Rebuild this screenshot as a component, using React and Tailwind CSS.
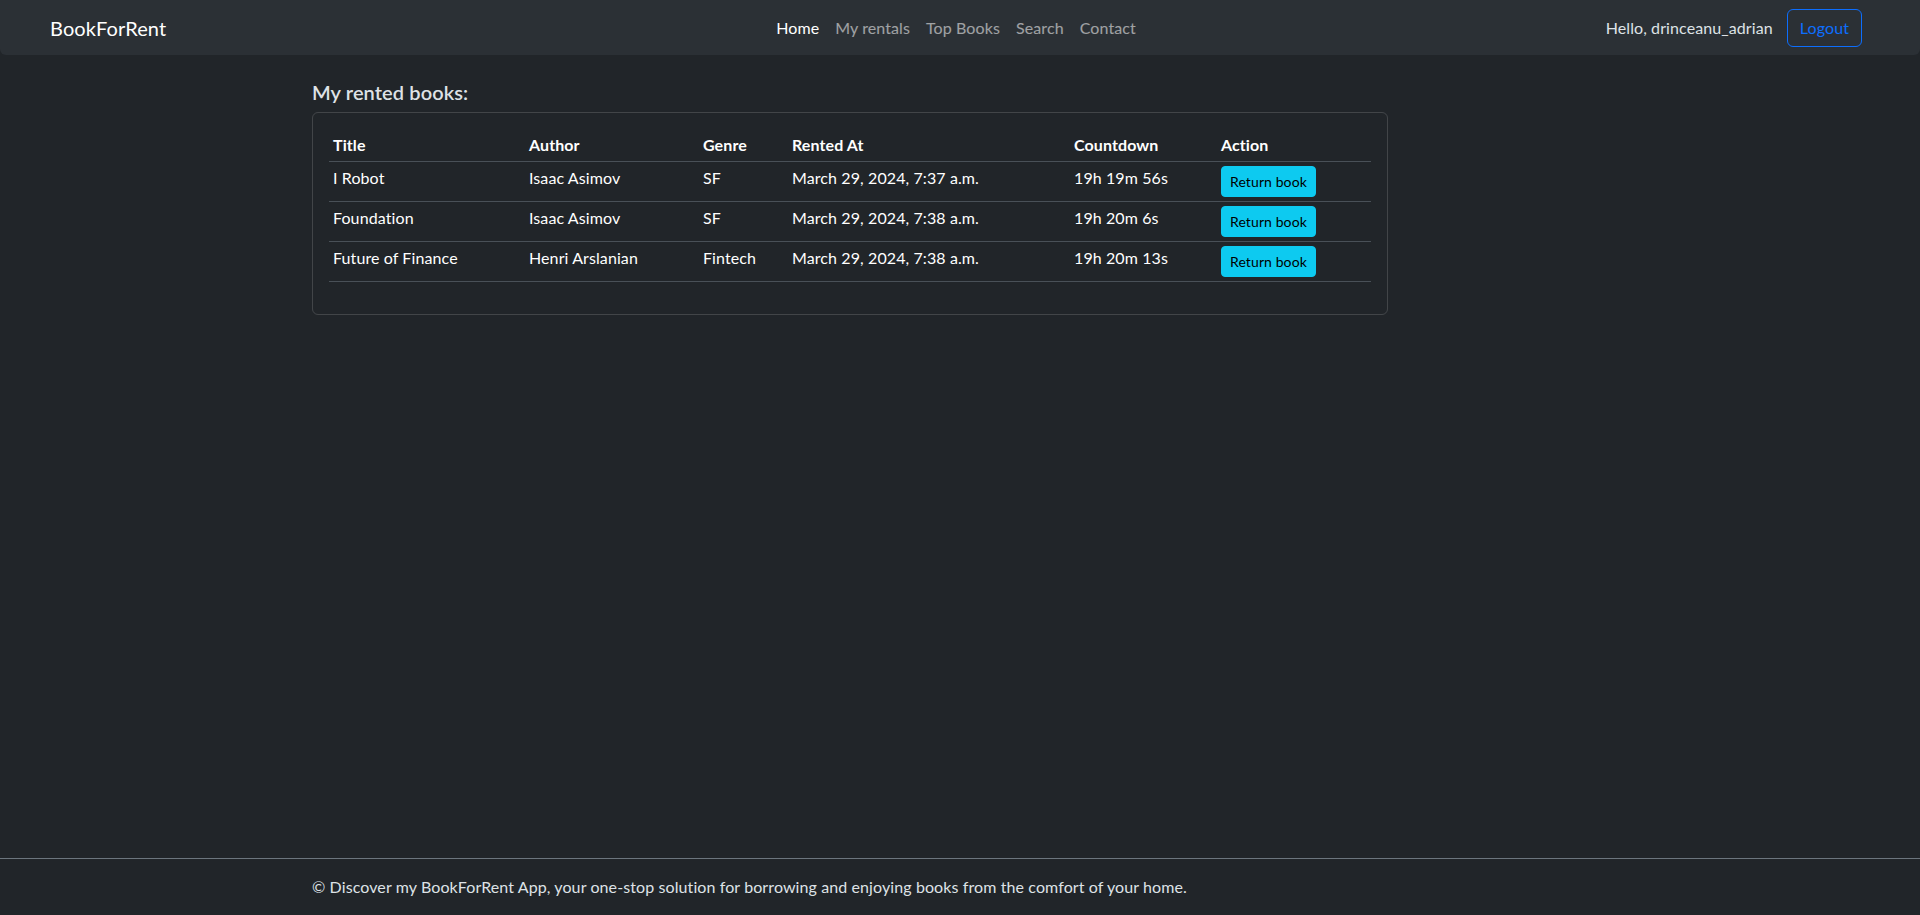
import React from "react";

const rentals = [
  { title: "I Robot", author: "Isaac Asimov", genre: "SF", rentedAt: "March 29, 2024, 7:37 a.m.", countdown: "19h 19m 56s" },
  { title: "Foundation", author: "Isaac Asimov", genre: "SF", rentedAt: "March 29, 2024, 7:38 a.m.", countdown: "19h 20m 6s" },
  { title: "Future of Finance", author: "Henri Arslanian", genre: "Fintech", rentedAt: "March 29, 2024, 7:38 a.m.", countdown: "19h 20m 13s" },
];

const links = ["Home", "My rentals", "Top Books", "Search", "Contact"];

export default function App() {
  return (
    <div
      className="min-h-screen flex flex-col bg-[#212529] text-[#dee2e6] text-base leading-6 tracking-[0.1px]"
      style={{ fontFamily: '"Segoe UI", Lato, "Liberation Sans", sans-serif' }}
    >
      <nav className="h-[55px] bg-[#2b3035] rounded-b-md flex items-center pl-[50px] pr-[58px]">
        <div className="flex-1">
          <span className="text-xl text-white">BookForRent</span>
        </div>
        <ul className="flex">
          {links.map((l, i) => (
            <li key={l}>
              <a href="#" className={`px-2 py-2 block ${i === 0 ? "text-white" : "text-white/55"}`}>{l}</a>
            </li>
          ))}
        </ul>
        <div className="flex-1 flex justify-end items-center gap-[14px]">
          <span className="text-[#dee2e6]">Hello, drinceanu_adrian</span>
          <button className="h-[38px] px-3 border border-[#0d6efd] text-[#0d6efd] rounded-md">Logout</button>
        </div>
      </nav>

      <main className="w-[1320px] mx-auto px-3 pt-[25px]">
        <h5 className="text-xl leading-6 font-semibold mb-2">My rented books:</h5>
        <div className="w-[1076px] border border-white/15 rounded-md p-4">
          <table className="w-full mb-4 border-collapse text-white">
            <colgroup>
              <col className="w-[196px]" />
              <col className="w-[174px]" />
              <col className="w-[89px]" />
              <col className="w-[282px]" />
              <col className="w-[147px]" />
              <col className="w-[154px]" />
            </colgroup>
            <thead>
              <tr className="border-b border-[#495057]">
                {["Title", "Author", "Genre", "Rented At", "Countdown", "Action"].map((h) => (
                  <th key={h} className="p-1 text-left font-bold align-bottom">{h}</th>
                ))}
              </tr>
            </thead>
            <tbody>
              {rentals.map((r) => (
                <tr key={r.title} className="border-b border-[#495057]">
                  <td className="p-1 align-top">{r.title}</td>
                  <td className="p-1 align-top">{r.author}</td>
                  <td className="p-1 align-top">{r.genre}</td>
                  <td className="p-1 align-top">{r.rentedAt}</td>
                  <td className="p-1 align-top">{r.countdown}</td>
                  <td className="p-1 align-top">
                    <button className="px-2 py-1 text-sm leading-[21px] bg-[#0dcaf0] border border-[#0dcaf0] text-black rounded">Return book</button>
                  </td>
                </tr>
              ))}
            </tbody>
          </table>
        </div>
      </main>

      <footer className="mt-auto border-t border-[#6c757d] py-4">
        <div className="w-[1320px] mx-auto px-3">
          © Discover my BookForRent App, your one-stop solution for borrowing and enjoying books from the comfort of your home.
        </div>
      </footer>
    </div>
  );
}
